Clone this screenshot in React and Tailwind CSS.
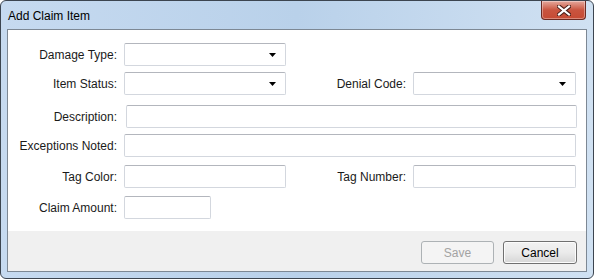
const font = { fontFamily: '"Liberation Sans", Arial, sans-serif' };

const Field = ({ width, arrow, className = '' }) => (
  <div
    className={`relative h-[23px] shrink-0 rounded-[2px] border border-[#d3d7de] border-t-[#b3b6bd] bg-white ${className}`}
    style={{ width }}
  >
    {arrow && (
      <svg className="absolute right-[9px] top-[9px]" width="7" height="4" viewBox="0 0 7 4">
        <path d="M0 0h7L3.5 4z" fill="#000" />
      </svg>
    )}
  </div>
);

const Label = ({ children, width = 109 }) => (
  <div className="shrink-0 pr-[7px] text-right text-[12px] leading-[14px] text-[#1a1a1a]" style={{ width: width + 7 }}>
    {children}
  </div>
);

const App = () => {
  return (
    <div className="h-[279px] w-[594px] bg-white" style={font}>
      <div className="flex h-[279px] w-[594px] flex-col rounded-[6px] border border-[#3c4550] bg-gradient-to-r from-[#c6daf0] via-[#b9d1ea] to-[#d0e1f2]">
        {/* title bar */}
        <div className="flex h-[28px] items-start justify-between">
          <div className="pl-[7px] pt-[8px] text-[12px] leading-[14px] text-black">Add Claim Item</div>
          <div className="mr-[7px] flex h-[19px] w-[45px] items-center justify-center rounded-b-[4px] border border-t-0 border-[#6b2a22] bg-gradient-to-b from-[#e4a89d] via-[#c9543f] to-[#c64a33] shadow-[inset_0_0_0_1px_rgba(255,255,255,0.35)]">
            <svg width="14" height="11" viewBox="0 0 14 11">
              <path d="M2 1.5l10 8M12 1.5l-10 8" stroke="#4a1e18" strokeWidth="4.2" strokeLinecap="square" />
              <path d="M2 1.5l10 8M12 1.5l-10 8" stroke="#fff" strokeWidth="2.2" strokeLinecap="square" />
            </svg>
          </div>
        </div>

        {/* client area */}
        <div className="mx-[6px] flex h-[243px] flex-col border border-[#7d8894] bg-white">
          <div className="flex h-[201px] flex-col pt-[13px]">
            <div className="flex h-[23px] items-center">
              <Label>Damage Type:</Label>
              <Field width={162} arrow />
            </div>
            <div className="mt-[6px] flex h-[23px] items-center">
              <Label>Item Status:</Label>
              <Field width={162} arrow />
              <Label width={120}>Denial Code:</Label>
              <Field width={163} arrow />
            </div>
            <div className="mt-[10px] flex h-[23px] items-center">
              <Label>Description:</Label>
              <Field width={451} className="ml-[2px]" />
            </div>
            <div className="mt-[6px] flex h-[23px] items-center">
              <Label>Exceptions Noted:</Label>
              <Field width={452} />
            </div>
            <div className="mt-[8px] flex h-[23px] items-center">
              <Label>Tag Color:</Label>
              <Field width={162} />
              <Label width={120}>Tag Number:</Label>
              <Field width={163} />
            </div>
            <div className="mt-[8px] flex h-[23px] items-center">
              <Label>Claim Amount:</Label>
              <Field width={87} />
            </div>
          </div>

          {/* footer */}
          <div className="flex h-[40px] items-start justify-end gap-[9px] bg-[#f0f0f0] pr-[9px] pt-[10px]">
            <button
              disabled
              className="h-[23px] w-[73px] rounded-[3px] border border-[#adb2b5] bg-[#f4f4f4] text-[12px] text-[#a3a3a3]"
            >
              Save
            </button>
            <button className="h-[23px] w-[74px] rounded-[3px] border border-[#707070] bg-gradient-to-b from-[#f2f2f2] via-[#ebebeb] to-[#d6d6d6] text-[12px] text-black shadow-[inset_0_0_0_1px_#fcfcfc]">
              Cancel
            </button>
          </div>
        </div>
      </div>
    </div>
  );
};

export default App;
